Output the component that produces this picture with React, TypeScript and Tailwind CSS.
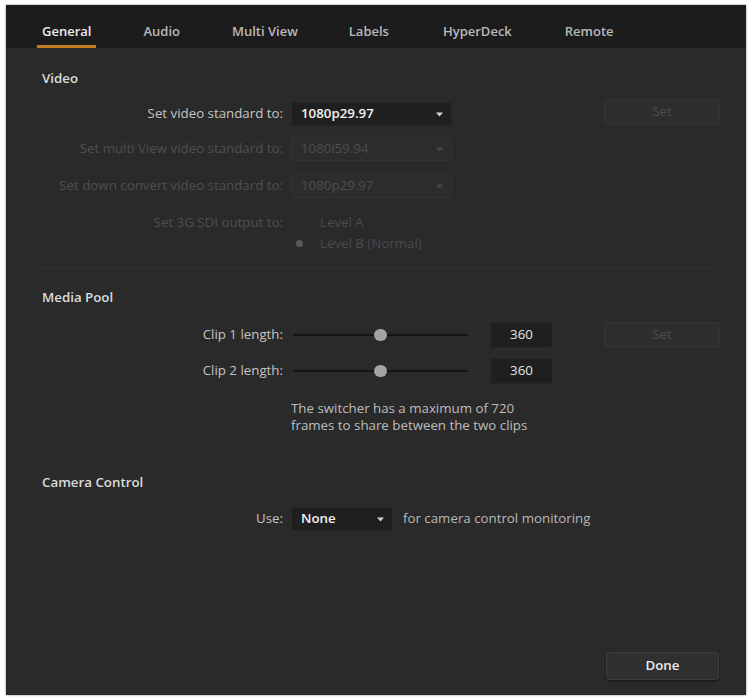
import * as React from "react";

const tabs = [
  { label: "General", ml: "" },
  { label: "Audio", ml: "ml-[2px]" },
  { label: "Multi View", ml: "ml-[2px]" },
  { label: "Labels", ml: "ml-[1px]" },
  { label: "HyperDeck", ml: "ml-[4px]" },
  { label: "Remote", ml: "ml-[3px]" },
];

function Caret({ dim = false }: { dim?: boolean }) {
  return (
    <svg width="7" height="5" viewBox="0 0 7 5" className="shrink-0">
      <path d="M0 0.5 L7 0.5 L3.5 4.5 Z" fill={dim ? "#4a4a4a" : "#d4d4d4"} />
    </svg>
  );
}

function Dropdown({
  value,
  dim = false,
  width = "w-[161px]",
}: {
  value: string;
  dim?: boolean;
  width?: string;
}) {
  return (
    <div
      className={`${width} h-[24px] flex items-center justify-between pl-[9px] pr-[8px] rounded-[2px] ${
        dim
          ? "bg-[#2c2c2c] border border-[#323232] text-[#4e4e4e]"
          : "bg-[#1f1f1f] border border-[#262626] text-[#f2f2f2] font-semibold"
      }`}
    >
      <span>{value}</span>
      <Caret dim={dim} />
    </div>
  );
}

function SetButton() {
  return (
    <div className="w-[116px] h-[26px] flex items-center justify-center rounded-[2px] bg-[#2e2e2e] border border-[#343434] text-[#4d4d4d]">
      Set
    </div>
  );
}

function Label({ children, dim = false }: { children: React.ReactNode; dim?: boolean }) {
  return (
    <div className={`w-[277px] shrink-0 text-right ${dim ? "text-[#4f4f4f]" : "text-[#c4c4c4]"}`}>
      {children}
    </div>
  );
}

function Slider() {
  return (
    <div className="ml-[2px] w-[175px] h-[14px] relative flex items-center">
      <div className="w-full h-[2px] bg-[#141414]" />
      <div className="absolute left-[81px] top-[1px] w-[13px] h-[12px] rounded-full bg-[#a3a3a3]" />
    </div>
  );
}

function NumberBox({ value }: { value: string }) {
  return (
    <div className="w-[63px] h-[26px] flex items-center justify-center bg-[#1f1f1f] border border-[#262626] rounded-[2px] text-[#e6e6e6]">
      {value}
    </div>
  );
}

function Radio({ checked, label }: { checked: boolean; label: string }) {
  return (
    <div className="flex items-center gap-[16px] h-[21px] text-[#4b4b4b]">
      <div className="w-[9px] h-[9px] rounded-full flex items-center justify-center">
        {checked && <div className="w-[7px] h-[7px] rounded-full bg-[#5a5a5a]" />}
      </div>
      <span>{label}</span>
    </div>
  );
}

export default function App() {
  return (
    <div
      className="w-[754px] h-[699px] bg-white pt-[5px] pl-[6px]"
      style={{ fontFamily: '"Open Sans", "Liberation Sans", sans-serif' }}
    >
      <div className="w-[740px] h-[690px] bg-[#2a2a2a] flex flex-col text-[13.3px] shadow-[0_0_2px_rgba(0,0,0,0.5)]">
        {/* Tabs */}
        <div className="h-[43px] bg-[#1c1c1c] flex items-stretch pl-[31px] gap-[40px] shrink-0">
          {tabs.map((t, i) => (
            <div
              key={t.label}
              className={`px-[5px] flex items-center pt-[13px] text-[13px] font-semibold border-b-[3px] ${t.ml} ${
                i === 0 ? "border-[#c47d22] text-[#ececec]" : "border-transparent text-[#b9b9b9]"
              }`}
            >
              {t.label}
            </div>
          ))}
        </div>

        {/* Video */}
        <div className="pl-[36px] mt-[22px] h-[18px] flex items-center font-semibold text-[#dcdcdc]">Video</div>

        <div className="mt-[13px] flex items-center gap-[8px] h-[26px]">
          <Label>Set video standard to:</Label>
          <Dropdown value="1080p29.97" />
          <div className="ml-[144px] -mt-[5px]">
            <SetButton />
          </div>
        </div>

        <div className="mt-[9px] flex items-center gap-[8px] h-[26px]">
          <Label dim>Set multi View video standard to:</Label>
          <Dropdown value="1080i59.94" dim />
        </div>

        <div className="mt-[11px] flex items-center gap-[8px] h-[26px]">
          <Label dim>Set down convert video standard to:</Label>
          <Dropdown value="1080p29.97" dim />
        </div>

        <div className="mt-[13px] flex items-start gap-[8px]">
          <div className="h-[21px] flex items-center">
            <Label dim>Set 3G SDI output to:</Label>
          </div>
          <div className="pl-[4px] flex flex-col">
            <Radio checked={false} label="Level A" />
            <Radio checked label="Level B (Normal)" />
          </div>
        </div>

        <div className="mt-[14px] mx-[36px] h-px bg-[#333333]" />

        {/* Media Pool */}
        <div className="pl-[36px] mt-[20px] h-[18px] flex items-center font-semibold text-[#dcdcdc]">Media Pool</div>

        <div className="mt-[15px] flex items-center gap-[8px] h-[26px]">
          <Label>Clip 1 length:</Label>
          <Slider />
          <div className="ml-[14px]">
            <NumberBox value="360" />
          </div>
          <div className="ml-[43px]">
            <SetButton />
          </div>
        </div>

        <div className="mt-[10px] flex items-center gap-[8px] h-[26px]">
          <Label>Clip 2 length:</Label>
          <Slider />
          <div className="ml-[14px]">
            <NumberBox value="360" />
          </div>
        </div>

        <div className="mt-[16px] pl-[285px] text-[#bdbdbd] leading-[17px]">
          <div>The switcher has a maximum of 720</div>
          <div>frames to share between the two clips</div>
        </div>

        <div className="mt-[20px] mx-[36px] h-px bg-[#2e2e2e]" />

        {/* Camera Control */}
        <div className="pl-[36px] mt-[19px] h-[18px] flex items-center font-semibold text-[#dcdcdc]">Camera Control</div>

        <div className="mt-[14px] flex items-center gap-[8px] h-[26px]">
          <Label>Use:</Label>
          <Dropdown value="None" width="w-[102px]" />
          <span className="ml-[2px] text-[#b8b8b8]">for camera control monitoring</span>
        </div>

        <div className="flex-1" />

        <div className="flex justify-end pr-[27px] pb-[15px]">
          <div className="w-[113px] h-[28px] flex items-center justify-center rounded-[3px] bg-[#303030] border border-[#3c3c3c] text-[#ededed] font-semibold shadow-[0_1px_2px_rgba(0,0,0,0.5)]">
            Done
          </div>
        </div>
      </div>
    </div>
  );
}
